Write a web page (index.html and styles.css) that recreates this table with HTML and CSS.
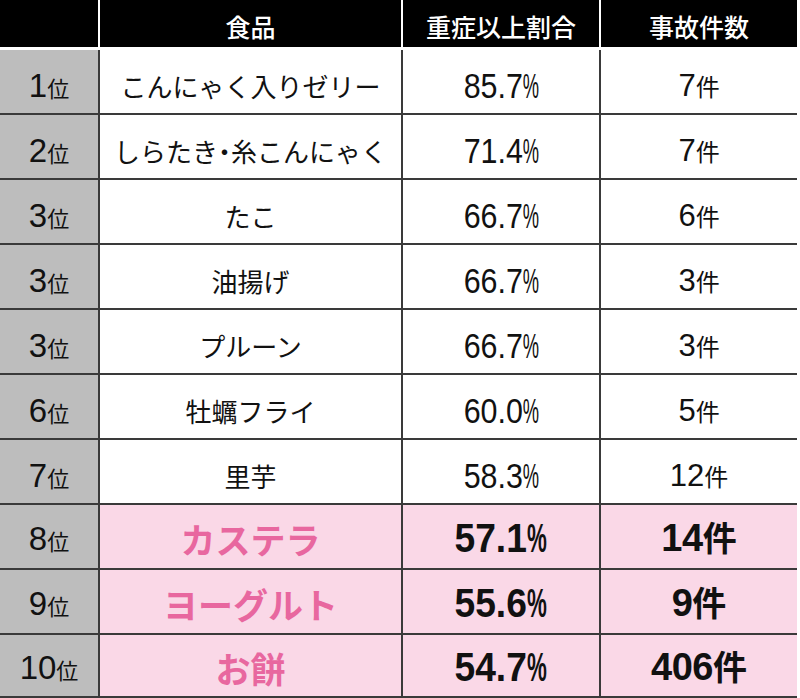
FILE: index.html
```html
<!DOCTYPE html>
<html lang="ja">
<head>
<meta charset="utf-8">
<link rel="stylesheet" href="styles.css">
</head>
<body>
<div class="chart">
  <div class="head">
    <div class="hcell"></div>
    <div class="hcell">食品</div>
    <div class="hcell">重症以上割合</div>
    <div class="hcell">事故件数</div>
  </div>
  <div class="rows">
    <div class="rank"><span class="v"><span class="n">1</span><span class="i">位</span></span></div>
    <div class="food"><span class="v">こんにゃく入りゼリー</span></div>
    <div class="pct"><span class="v">85.7<span class="pc">%</span></span></div>
    <div class="cnt"><span class="v"><span class="n">7</span><span class="k">件</span></span></div>

    <div class="rank"><span class="v"><span class="n">2</span><span class="i">位</span></span></div>
    <div class="food"><span class="v">しらたき<span class="dot">・</span>糸こんにゃく</span></div>
    <div class="pct"><span class="v">71.4<span class="pc">%</span></span></div>
    <div class="cnt"><span class="v"><span class="n">7</span><span class="k">件</span></span></div>

    <div class="rank"><span class="v"><span class="n">3</span><span class="i">位</span></span></div>
    <div class="food"><span class="v">たこ</span></div>
    <div class="pct"><span class="v">66.7<span class="pc">%</span></span></div>
    <div class="cnt"><span class="v"><span class="n">6</span><span class="k">件</span></span></div>

    <div class="rank"><span class="v"><span class="n">3</span><span class="i">位</span></span></div>
    <div class="food"><span class="v">油揚げ</span></div>
    <div class="pct"><span class="v">66.7<span class="pc">%</span></span></div>
    <div class="cnt"><span class="v"><span class="n">3</span><span class="k">件</span></span></div>

    <div class="rank"><span class="v"><span class="n">3</span><span class="i">位</span></span></div>
    <div class="food"><span class="v">プルーン</span></div>
    <div class="pct"><span class="v">66.7<span class="pc">%</span></span></div>
    <div class="cnt"><span class="v"><span class="n">3</span><span class="k">件</span></span></div>

    <div class="rank"><span class="v"><span class="n">6</span><span class="i">位</span></span></div>
    <div class="food"><span class="v">牡蠣フライ</span></div>
    <div class="pct"><span class="v">60.0<span class="pc">%</span></span></div>
    <div class="cnt"><span class="v"><span class="n">5</span><span class="k">件</span></span></div>

    <div class="rank"><span class="v"><span class="n">7</span><span class="i">位</span></span></div>
    <div class="food"><span class="v">里芋</span></div>
    <div class="pct"><span class="v">58.3<span class="pc">%</span></span></div>
    <div class="cnt"><span class="v"><span class="n">12</span><span class="k">件</span></span></div>

    <div class="rank hlrow"><span class="v"><span class="n">8</span><span class="i">位</span></span></div>
    <div class="food hl"><span class="v">カステラ</span></div>
    <div class="pct hl"><span class="v">57.1<span class="pc">%</span></span></div>
    <div class="cnt hl"><span class="v"><span class="n">14</span><span class="k">件</span></span></div>

    <div class="rank hlrow"><span class="v"><span class="n">9</span><span class="i">位</span></span></div>
    <div class="food hl"><span class="v">ヨーグルト</span></div>
    <div class="pct hl"><span class="v">55.6<span class="pc">%</span></span></div>
    <div class="cnt hl"><span class="v"><span class="n">9</span><span class="k">件</span></span></div>

    <div class="rank hlrow"><span class="v"><span class="n">10</span><span class="i">位</span></span></div>
    <div class="food hl"><span class="v">お餅</span></div>
    <div class="pct hl"><span class="v">54.7<span class="pc">%</span></span></div>
    <div class="cnt hl"><span class="v"><span class="n">406</span><span class="k">件</span></span></div>
  </div>
</div>
</body>
</html>
```

FILE: styles.css
```css
html, body {
  margin: 0;
  padding: 0;
  background: #ffffff;
}

.chart {
  width: 800px;
  height: 698px;
  overflow: hidden;
  font-family: "Noto Sans CJK JP", sans-serif;
  color: #111111;
}

.head {
  display: grid;
  grid-template-columns: 98px 301px 196px 196px;
  column-gap: 2px;
  height: 47px;
  margin-bottom: 3px;
}

.hcell {
  background: #000000;
  color: #ffffff;
  font-size: 25px;
  font-weight: 500;
  display: flex;
  align-items: center;
  justify-content: center;
  line-height: 1;
  padding-top: 6px;
  box-sizing: border-box;
}

.rows {
  display: grid;
  grid-template-columns: 98px 301px 196px 196px;
  grid-template-rows: repeat(9, 63px) 61px;
  gap: 2px;
  width: 797px;
  padding-bottom: 2px;
  background: #3a3a3a;
}

.rows > div {
  display: flex;
  align-items: center;
  justify-content: center;
  background: #ffffff;
  line-height: 1;
  box-sizing: border-box;
  padding-top: 8px;
  white-space: nowrap;
}

.rows > .rank {
  background: #bdbdbd;
}

.rows > .hl {
  background: #fad8e7;
}

.rows > .hl,
.rows > .hlrow {
  padding-top: 3px;
}

.n,
.pct {
  font-family: "Liberation Sans", Arial, sans-serif;
}

.pc {
  display: inline-block;
  transform: scaleX(0.6);
  transform-origin: left center;
  margin-right: -0.36em;
}

/* rank column */
.rank .n {
  font-size: 33px;
}

.rank .i {
  font-size: 22px;
}

/* food column */
.food {
  font-size: 26px;
}

.dot {
  font-feature-settings: "palt" 1;
}

.food.hl {
  color: #e8679f;
  font-size: 35px;
  font-weight: 700;
}

/* percentage column */
.pct {
  font-size: 35px;
}

.pct .v {
  transform: scaleX(0.87);
}

.pct.hl {
  font-size: 40px;
  font-weight: 700;
}

.pct.hl .v {
  transform: scaleX(0.93);
}

/* count column */
.cnt .n {
  font-size: 31px;
}

.cnt .k {
  font-size: 24px;
}

.cnt.hl .n {
  font-size: 38px;
  font-weight: 700;
  letter-spacing: -0.5px;
}

.cnt.hl .k {
  font-size: 34px;
  font-weight: 700;
}
```
